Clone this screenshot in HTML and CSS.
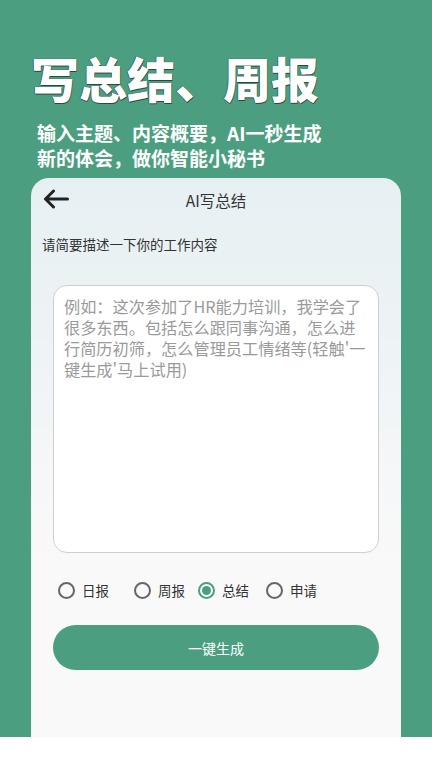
FILE: index.html
```html
<!DOCTYPE html>
<html lang="zh">
<head>
<meta charset="utf-8">
<title>AI写总结</title>
<link rel="stylesheet" href="styles.css">
</head>
<body>
<div class="screen">
  <h1 class="hero-title">写总结、周报</h1>
  <p class="hero-sub">输入主题、内容概要，AI一秒生成<br>新的体会，做你智能小秘书</p>
  <div class="card">
    <div class="header">
      <svg class="back" width="26" height="20" viewBox="0 0 26 20"><path d="M24.5 10H2.5M10.5 2L2.5 10l8 8" fill="none" stroke="#222" stroke-width="3" stroke-linecap="round" stroke-linejoin="round"/></svg>
      <span class="header-title">AI写总结</span>
    </div>
    <div class="label">请简要描述一下你的工作内容</div>
    <div class="input">
      <p class="ph">例如：这次参加了HR能力培训，我学会了<br>很多东西。包括怎么跟同事沟通，怎么进<br>行简历初筛，怎么管理员工情绪等(轻触'一<br>键生成'马上试用)</p>
    </div>
    <div class="radios">
      <label class="radio r1"><span class="dot"></span>日报</label>
      <label class="radio r2"><span class="dot"></span>周报</label>
      <label class="radio r3 on"><span class="dot"></span>总结</label>
      <label class="radio r4"><span class="dot"></span>申请</label>
    </div>
    <div class="btn">一键生成</div>
  </div>
</div>
</body>
</html>
```

FILE: styles.css
```css
html, body {
  margin: 0;
  padding: 0;
  background: #ffffff;
}
body {
  width: 432px;
  height: 768px;
  overflow: hidden;
  font-family: "Noto Sans CJK SC", "Noto Sans", sans-serif;
}
.screen {
  height: 737px;
  background: #4b9f80;
  overflow: hidden;
  display: flex;
  flex-direction: column;
}
.hero-title {
  margin: 49px 0 0 31px;
  font-size: 48px;
  line-height: 56px;
  font-weight: 800;
  color: #ffffff;
  letter-spacing: 0;
  text-shadow: 0 0 1px #25423a, 0.5px 0.5px 0 #2f4a40, -0.5px -0.5px 0 #2f4a40;
}
.hero-sub {
  margin: 15px 0 0 37px;
  font-size: 19px;
  line-height: 25px;
  font-weight: 700;
  color: #ffffff;
}
.card {
  margin: 8px 31px 0 31px;
  flex: 1;
  border-radius: 18px 18px 0 0;
  background: linear-gradient(180deg, #e6f0f2 0%, #eef3f5 30%, #f6f7f8 55%, #f9f9f9 70%);
  display: flex;
  flex-direction: column;
}
.header {
  height: 44px;
  display: flex;
  align-items: center;
  position: relative;
  padding-left: 12px;
}
.back {
  display: block;
  margin-top: -2px;
}
.header-title {
  position: absolute;
  left: 0;
  right: 0;
  text-align: center;
  top: 11px;
  font-size: 15.5px;
  line-height: 22px;
  color: #333333;
}
.label {
  margin: 12px 0 0 11px;
  font-size: 13.5px;
  line-height: 20px;
  color: #333333;
}
.input {
  margin: 31px 22px 0 22px;
  height: 268px;
  background: #ffffff;
  border: 1px solid #cfcfcf;
  border-radius: 14px;
  padding: 10px 0 0 10px;
  box-sizing: border-box;
}
.ph {
  margin: 0;
  font-size: 16.2px;
  line-height: 21px;
  color: #9a9a9a;
  white-space: nowrap;
}
.radios {
  margin: 27px 0 0 27px;
  display: flex;
  align-items: center;
  height: 20px;
}
.radio {
  display: flex;
  align-items: center;
  font-size: 13.5px;
  line-height: 20px;
  color: #333333;
}
.r1 { margin-right: 25px; }
.r2 { margin-right: 13px; }
.r3 { margin-right: 17px; }
.dot {
  width: 17px;
  height: 17px;
  border: 2px solid #666666;
  border-radius: 50%;
  box-sizing: border-box;
  margin-right: 7px;
  display: flex;
  align-items: center;
  justify-content: center;
}
.on .dot {
  border-color: #4b9f80;
}
.on .dot::after {
  content: "";
  width: 9px;
  height: 9px;
  border-radius: 50%;
  background: #4b9f80;
}
.btn {
  margin: 25px 22px 0 22px;
  height: 45px;
  border-radius: 23px;
  background: #4b9f80;
  color: #ffffff;
  font-size: 14px;
  display: flex;
  align-items: center;
  justify-content: center;
}
```
